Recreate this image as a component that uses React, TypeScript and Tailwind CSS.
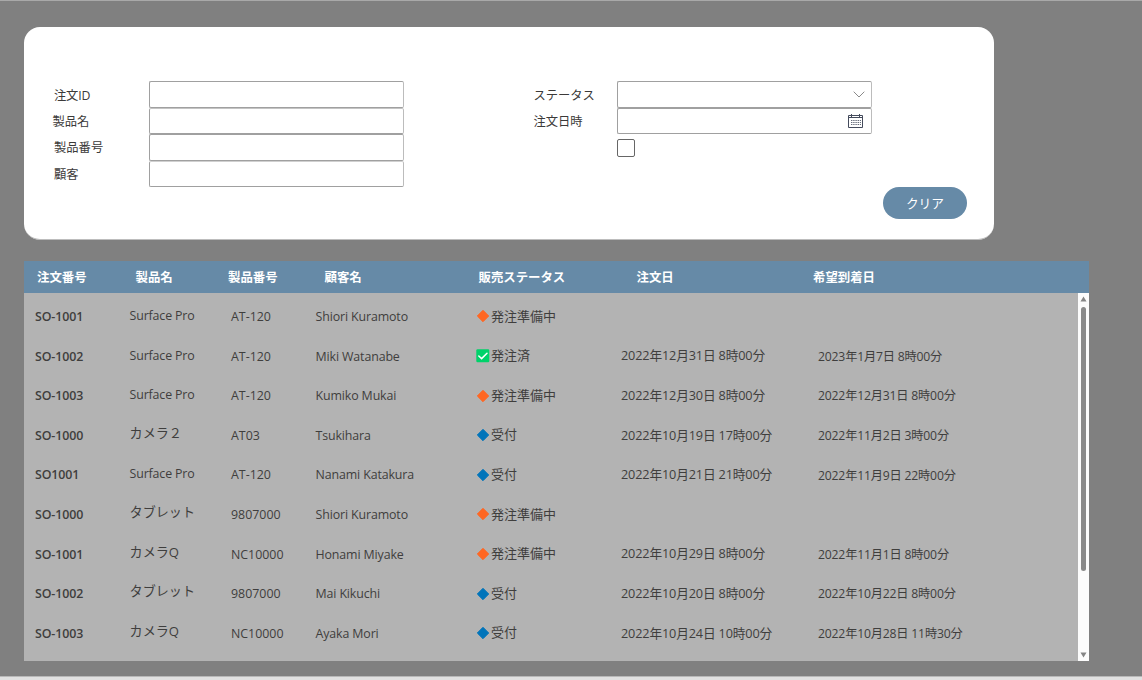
import React from 'react';

type Status = 'preparing' | 'ordered' | 'accepted';

interface Order {
  id: string;
  product: string;
  productNo: string;
  customer: string;
  status: Status;
  orderedAt: string;
  arrivalAt: string;
}

const ORDERS: Order[] = [
  { id: 'SO-1001', product: 'Surface Pro', productNo: 'AT-120', customer: 'Shiori Kuramoto', status: 'preparing', orderedAt: '', arrivalAt: '' },
  { id: 'SO-1002', product: 'Surface Pro', productNo: 'AT-120', customer: 'Miki Watanabe', status: 'ordered', orderedAt: '2022年12月31日 8時00分', arrivalAt: '2023年1月7日 8時00分' },
  { id: 'SO-1003', product: 'Surface Pro', productNo: 'AT-120', customer: 'Kumiko Mukai', status: 'preparing', orderedAt: '2022年12月30日 8時00分', arrivalAt: '2022年12月31日 8時00分' },
  { id: 'SO-1000', product: 'カメラ２', productNo: 'AT03', customer: 'Tsukihara', status: 'accepted', orderedAt: '2022年10月19日 17時00分', arrivalAt: '2022年11月2日 3時00分' },
  { id: 'SO1001', product: 'Surface Pro', productNo: 'AT-120', customer: 'Nanami Katakura', status: 'accepted', orderedAt: '2022年10月21日 21時00分', arrivalAt: '2022年11月9日 22時00分' },
  { id: 'SO-1000', product: 'タブレット', productNo: '9807000', customer: 'Shiori Kuramoto', status: 'preparing', orderedAt: '', arrivalAt: '' },
  { id: 'SO-1001', product: 'カメラQ', productNo: 'NC10000', customer: 'Honami Miyake', status: 'preparing', orderedAt: '2022年10月29日 8時00分', arrivalAt: '2022年11月1日 8時00分' },
  { id: 'SO-1002', product: 'タブレット', productNo: '9807000', customer: 'Mai Kikuchi', status: 'accepted', orderedAt: '2022年10月20日 8時00分', arrivalAt: '2022年10月22日 8時00分' },
  { id: 'SO-1003', product: 'カメラQ', productNo: 'NC10000', customer: 'Ayaka Mori', status: 'accepted', orderedAt: '2022年10月24日 10時00分', arrivalAt: '2022年10月28日 11時30分' },
];

const STATUS_LABEL: Record<Status, string> = {
  preparing: '発注準備中',
  ordered: '発注済',
  accepted: '受付',
};

function StatusIcon({ status }: { status: Status }) {
  if (status === 'ordered') {
    return (
      <svg className="size-[14px] shrink-0" viewBox="0 0 14 14">
        <rect x="0.3" y="0.3" width="13" height="13" rx="1.2" fill="#00d26a" />
        <path d="M2.8 7 5.6 9.6 11 4.2" fill="none" stroke="#fff" strokeWidth="1.5" strokeLinecap="round" />
      </svg>
    );
  }
  return (
    <svg className="size-[14px] shrink-0" viewBox="0 0 14 14">
      <path
        d="M7 1.3 12.7 7 7 12.7 1.3 7Z"
        fill={status === 'preparing' ? '#ff6723' : '#0074ba'}
        stroke={status === 'preparing' ? '#ff6723' : '#0074ba'}
        strokeLinejoin="round"
      />
    </svg>
  );
}

function CalendarIcon() {
  return (
    <svg className="h-[14px] w-[15px]" viewBox="0 0 15 14" fill="none" stroke="#444b5c">
      <path d="M0.5 1.5H14.5V13.5H0.5ZM0.5 3.5H14.5M3.5 0V3M11.5 0V3" />
      <path d="M3 6.5H13M3 8.5H13M3 10.5H13" stroke="#666c7a" strokeWidth="1.2" strokeDasharray="1.4 0.8" />
    </svg>
  );
}

const fieldClass =
  'flex w-[255px] items-center justify-end rounded-[2px] border border-[#a0a0a0] border-r-[#bcbcbc] bg-white';

function SearchPanel() {
  return (
    <section className="ml-[0.4px] flex h-[213px] w-[970px] rounded-[16px] border-b border-[#bdbdbd] bg-white pt-[54px] text-[12.3px] text-[#3b3a39]">
      <div className="ml-[29.6px] flex w-[95px] flex-col">
        <label className="h-[26px] leading-[29px] tracking-[-0.2px]">注文ID</label>
        <label className="-ml-[1.5px] h-[26px] leading-[29px]">製品名</label>
        <label className="h-[27px] leading-[29px]">製品番号</label>
        <label className="h-[26px] leading-[29px]">顧客</label>
      </div>
      <div className="flex flex-col">
        <div className={`h-[27px] ${fieldClass}`} />
        <div className={`h-[26px] border-t-[#c4c4c4] ${fieldClass}`} />
        <div className={`h-[27px] ${fieldClass}`} />
        <div className={`h-[26px] border-t-[#d0d0d0] ${fieldClass}`} />
      </div>
      <div className="ml-[129.4px] flex w-[83.6px] flex-col">
        <label className="h-[26px] leading-[30px]">ステータス</label>
        <label className="h-[26px] leading-[29px]">注文日時</label>
      </div>
      <div className="flex flex-col">
        <div className={`h-[27px] pr-[6px] ${fieldClass}`}>
          <svg className="h-[7px] w-[12px]" viewBox="0 0 12 7" fill="none" stroke="#8a8a8a">
            <path d="M0.7 0.7 6 6 11.3 0.7" />
          </svg>
        </div>
        <div className={`h-[26px] pr-[8px] ${fieldClass}`}>
          <CalendarIcon />
        </div>
        <div className="mt-[5px] size-[18px] rounded-[2px] border border-[#666] bg-white" />
        <button className="mt-[30px] ml-[266px] h-[32px] w-[84px] shrink-0 rounded-full bg-[#668aa7] pt-[2px] text-[12.7px] text-white">
          クリア
        </button>
      </div>
    </section>
  );
}

function OrderRow({ order }: { order: Order }) {
  const isLatin = order.product.startsWith('Surface');
  return (
    <div className="grid h-[39.6px] grid-cols-[94.6px_101.4px_84.5px_160.5px_145px_197px_1fr] items-center pl-[11px] text-[12.4px] whitespace-nowrap text-[#3f3e3d]">
      <span className="pt-[2px] font-semibold tracking-[-0.1px]">{order.id}</span>
      <span className={isLatin ? 'tracking-[-0.15px]' : '-mt-[3px] text-[13.1px]'}>{order.product}</span>
      <span className="pt-[2px]">{order.productNo}</span>
      <span className="pt-[2px] tracking-[-0.12px]">{order.customer}</span>
      <span className="flex items-center gap-[1px] text-[13px]">
        <StatusIcon status={order.status} />
        {STATUS_LABEL[order.status]}
      </span>
      <span className="text-[12.7px] tracking-[-0.15px]">{order.orderedAt}</span>
      <span className="pt-[2px] text-[12.2px] tracking-[-0.18px]">{order.arrivalAt}</span>
    </div>
  );
}

function Scrollbar() {
  return (
    <div className="flex w-[11px] shrink-0 flex-col items-center bg-[#fcfcfc] py-[3px]">
      <svg className="h-[6px] w-[7px] shrink-0" viewBox="0 0 7 6" fill="#858585">
        <path d="M3.5 0.5 6.5 5.5H0.5Z" />
      </svg>
      <div className="mt-[5px] h-[264px] w-[5px] rounded-full bg-[#8a8a8a]" />
      <svg className="mt-auto h-[6px] w-[7px] shrink-0" viewBox="0 0 7 6" fill="#858585">
        <path d="M0.5 0.5H6.5L3.5 5.5Z" />
      </svg>
    </div>
  );
}

function OrderTable() {
  return (
    <section className="mt-[21px] w-[1065px]">
      <div className="grid h-[32px] grid-cols-[98.5px_92.5px_96.5px_154px_158px_176.5px_1fr] items-center bg-[#668aa7] pt-[2px] pl-[13px] text-[12.4px] font-bold text-white">
        <span>注文番号</span>
        <span>製品名</span>
        <span>製品番号</span>
        <span>顧客名</span>
        <span>販売ステータス</span>
        <span>注文日</span>
        <span>希望到着日</span>
      </div>
      <div className="flex h-[368px] bg-[#b3b3b3]">
        <div className="flex-1 overflow-hidden pt-[3.6px]">
          {ORDERS.map((order, i) => (
            <OrderRow key={i} order={order} />
          ))}
        </div>
        <Scrollbar />
      </div>
    </section>
  );
}

export default function App() {
  return (
    <main className="flex h-[680px] w-[1142px] flex-col overflow-hidden border-t border-[#a9a9a9] bg-[#808080] font-['Open_Sans','Noto_Sans_CJK_JP',sans-serif]">
      <div className="flex-1 pt-[26px] pl-[24px]">
        <SearchPanel />
        <OrderTable />
      </div>
      <footer className="h-[4px] shrink-0 border-t border-[#b8b8b8] bg-[#e1e1e1]" />
    </main>
  );
}
